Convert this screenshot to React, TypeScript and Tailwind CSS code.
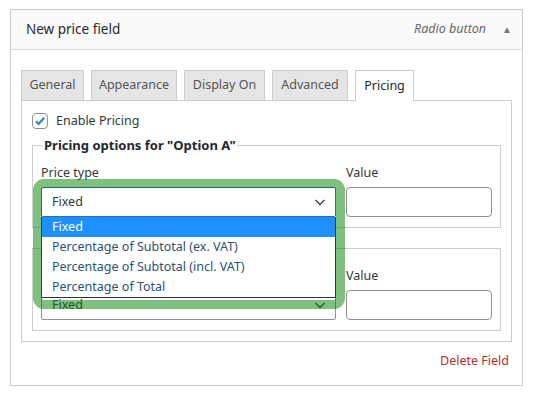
import React from "react";

const tabs = [
  { label: "General", w: "w-[63px]" },
  { label: "Appearance", w: "w-[86px]" },
  { label: "Display On", w: "w-[81px]" },
  { label: "Advanced", w: "w-[76px]" },
];

const options = [
  "Fixed",
  "Percentage of Subtotal (ex. VAT)",
  "Percentage of Subtotal (incl. VAT)",
  "Percentage of Total",
];

function Chevron() {
  return (
    <svg width="14" height="14" viewBox="0 0 14 14" fill="none">
      <path d="M2.5 5l4.5 4.5L11.5 5" stroke="#3c434a" strokeWidth="1.4" />
    </svg>
  );
}

function PricingRow({ open, legend }: { open?: boolean; legend: string }) {
  return (
    <fieldset className="mx-[10px] border border-[#cccccc] px-[8px] pb-[10px] pt-0">
      <legend className="ml-[2px] px-[1px] text-[13px] font-bold leading-[18px] text-[#23282d]">{legend}</legend>
      <div className="flex gap-[10px]">
        <div className="relative flex w-[295px] flex-col">
          <span className="mt-[9px] h-[20px] leading-[20px] text-[#32373c]">Price type</span>
          <div
            className={
              "mt-[4px] flex h-[30px] items-center justify-between rounded-[2px] bg-white pl-[10px] pr-[8px] " +
              (open ? "relative z-20 border border-[#2271b1]" : "border border-[#8c8f94]")
            }
          >
            <span className="text-[#32373c]">Fixed</span>
            <Chevron />
          </div>
          {open && (
            <>
              <ul className="absolute left-0 top-[63px] z-20 w-[295px] border border-t-0 border-[#2c3338] bg-white">
                {options.map((o, i) => (
                  <li
                    key={o}
                    className={
                      "h-[20px] pl-[10px] leading-[20px] " +
                      (i === 0 ? "bg-[#1e90ff] text-white" : "text-[#2b5273]")
                    }
                  >
                    {o}
                  </li>
                ))}
              </ul>
              {/* highlight ring drawn over the open select */}
              <div className="pointer-events-none absolute left-[-8px] top-[25px] z-30 h-[130px] w-[312px] rounded-[11px] border-[9px] border-[rgba(0,128,0,0.5)]" />
            </>
          )}
        </div>
        <div className="flex flex-1 flex-col">
          <span className="mt-[9px] h-[20px] leading-[20px] text-[#32373c]">Value</span>
          <div className="mt-[4px] h-[30px] rounded-[4px] border border-[#8c8f94] bg-white" />
        </div>
      </div>
    </fieldset>
  );
}

export default function App() {
  return (
    <div
      className="h-[393px] w-[533px] bg-white pl-[10px] pt-[9px] text-[12.5px] text-[#32373c]"
      style={{ fontFamily: '"Noto Sans", "Open Sans", sans-serif' }}
    >
      <div className="w-[513px] border border-[#cccccc] bg-white">
        {/* header */}
        <div className="flex h-[40px] items-center justify-between border-b border-[#dddddd] bg-[#fafafa] pl-[15px] pr-[10px]">
          <span className="text-[13.5px] text-[#23282d]">New price field</span>
          <div className="flex items-center gap-[16px]">
            <span className="italic text-[#666666]">Radio button</span>
            <span className="text-[10px] text-[#777777]">▲</span>
          </div>
        </div>

        <div className="px-[10px] pt-[20px]">
          {/* tabs */}
          <div className="flex items-end gap-[7px]">
            {tabs.map((t) => (
              <div
                key={t.label}
                className={
                  "flex h-[30px] items-center justify-center border border-b-0 border-[#cccccc] bg-[#e5e5e5] text-[#555555] " +
                  t.w
                }
              >
                {t.label}
              </div>
            ))}
            <div className="relative z-10 mb-[-1px] flex h-[31px] w-[59px] items-center justify-center border border-b-0 border-[#cccccc] bg-white text-[#23282d]">
              Pricing
            </div>
          </div>

          {/* panel */}
          <div className="flex flex-col border border-[#cccccc] pb-[10px] pt-[12px]">
            <label className="ml-[10px] flex h-[16px] items-center gap-[8px]">
              <span className="flex h-[16px] w-[16px] items-center justify-center rounded-[4px] border border-[#8c8f94] bg-white">
                <svg width="14" height="14" viewBox="0 0 14 14" fill="none">
                  <path d="M3 7.2l2.6 2.7L11.2 3.8" stroke="#1e8cbe" strokeWidth="2.2" />
                </svg>
              </span>
              <span>Enable Pricing</span>
            </label>
            <div className="mt-[7px] flex flex-col gap-[11px]">
              <PricingRow open legend={'Pricing options for "Option A"'} />
              <PricingRow legend={'Pricing options for "Option B"'} />
            </div>
          </div>

          <div className="flex h-[43px] items-start justify-end pr-[3px] pt-[9px]">
            <span className="leading-[20px] text-[#b32d2e]">Delete Field</span>
          </div>
        </div>
      </div>
    </div>
  );
}
